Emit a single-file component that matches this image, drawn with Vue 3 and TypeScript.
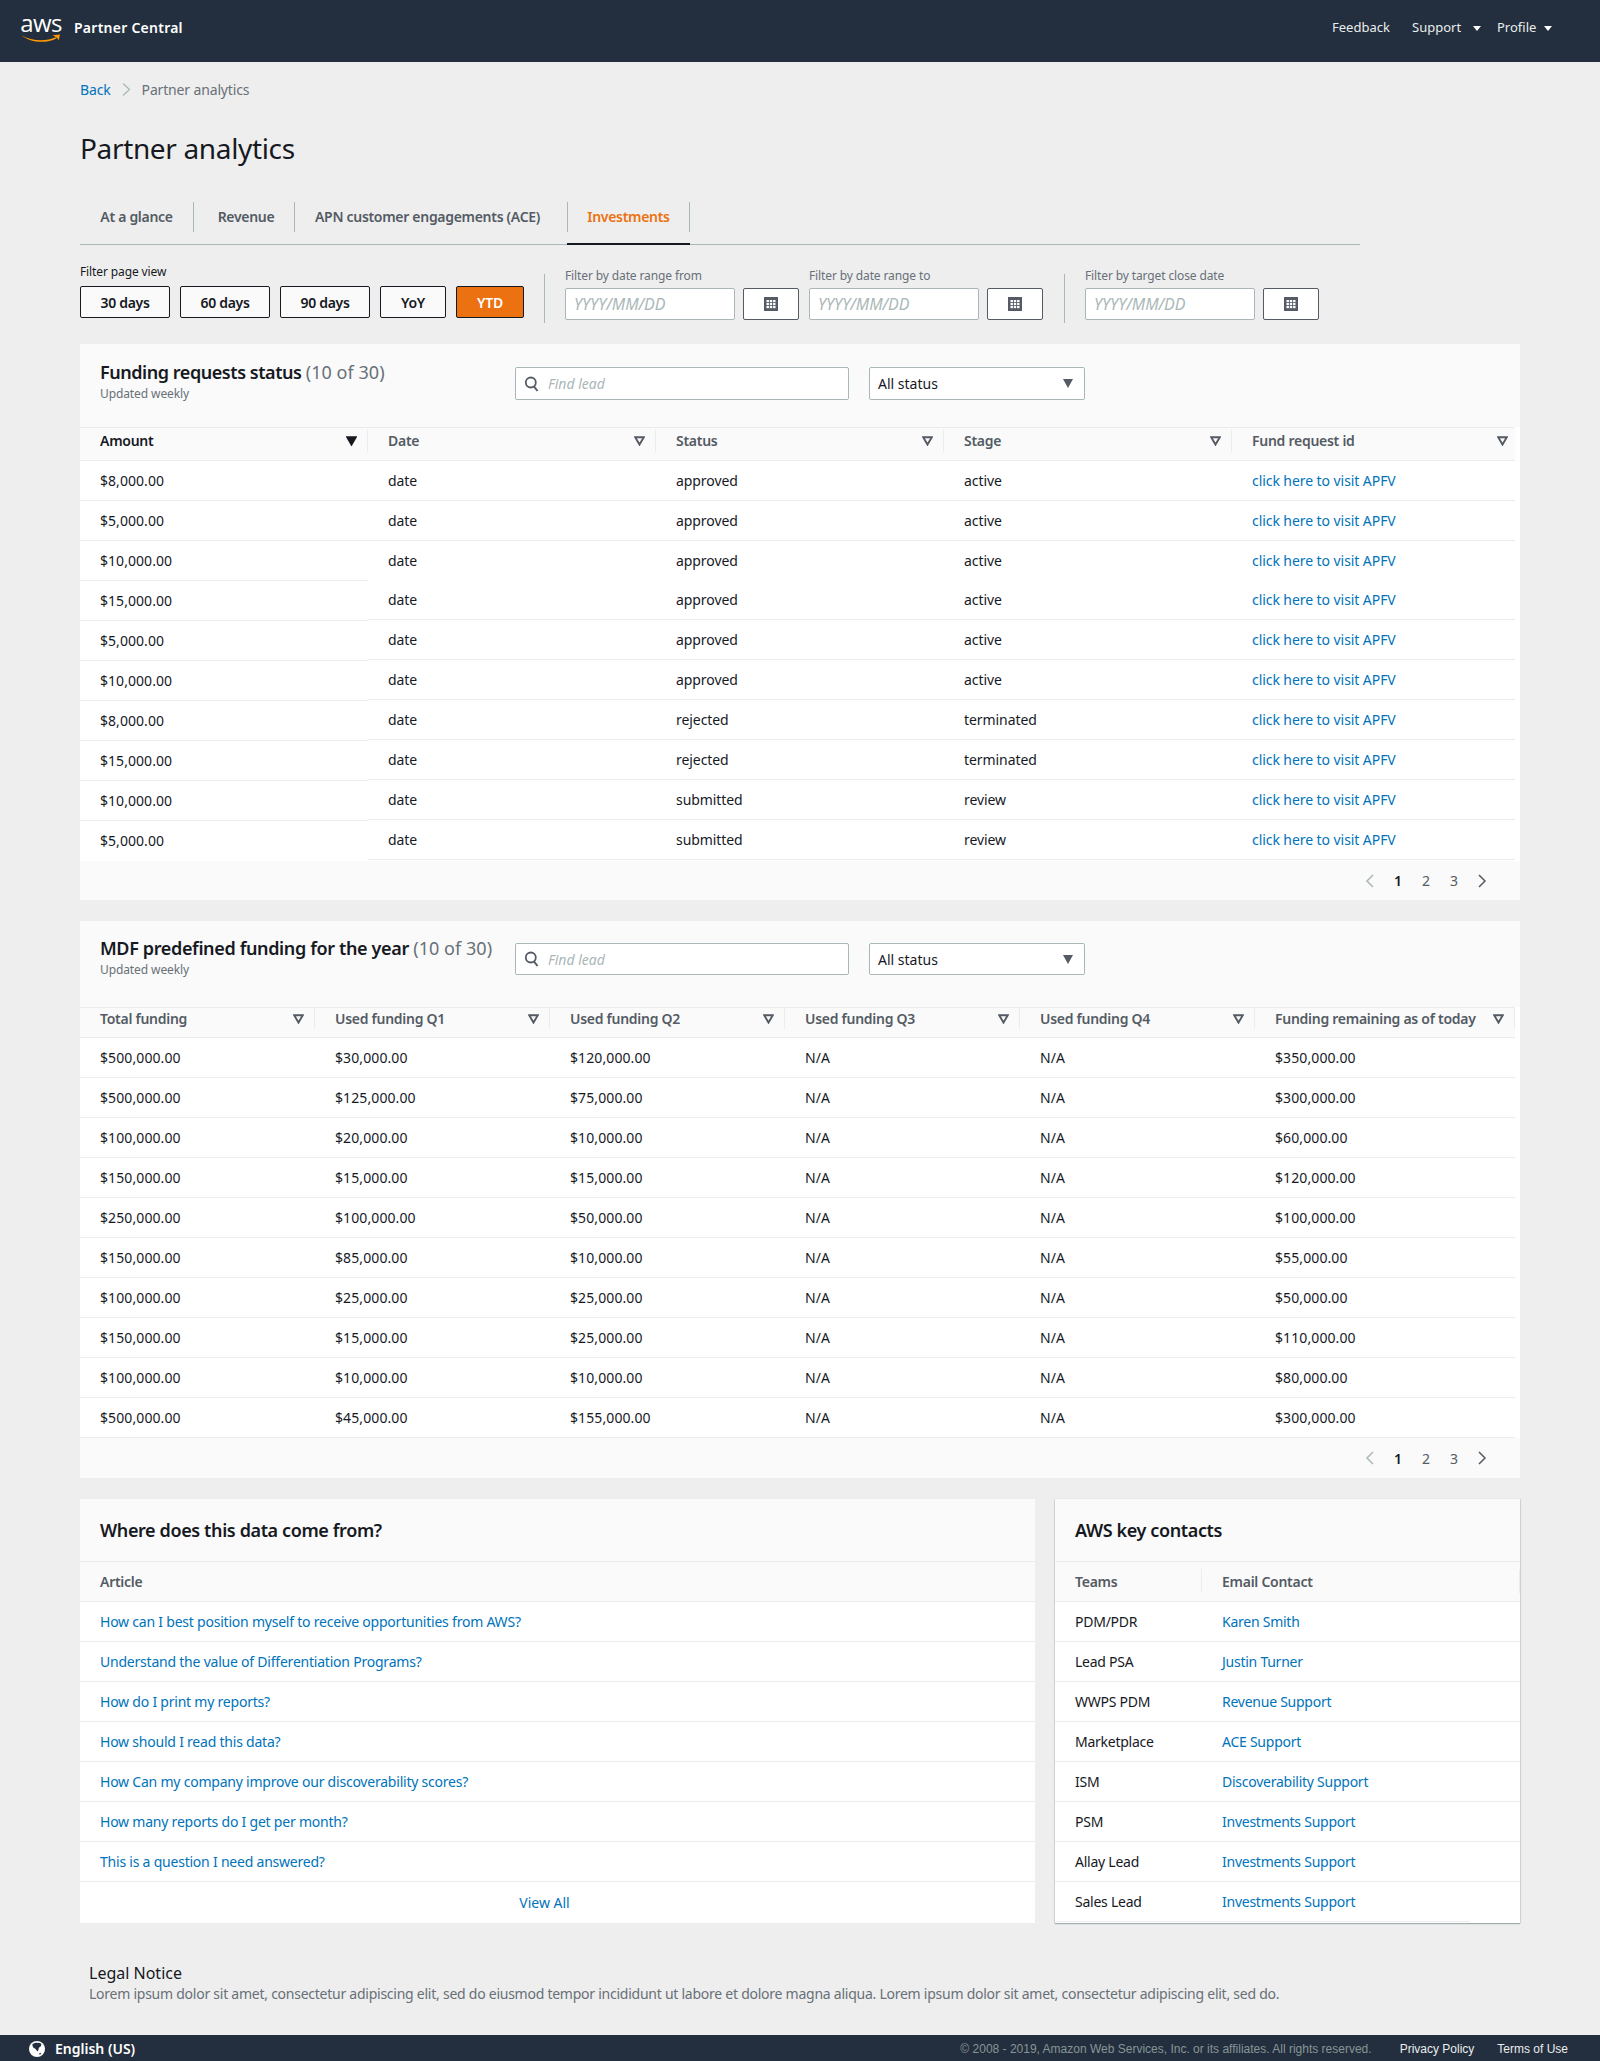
<script setup lang="ts">
const tabs = [
  { label: 'At a glance', w: 114 },
  { label: 'Revenue', w: 101, cls: 'nudge-r' },
  { label: 'APN customer engagements (ACE)', w: 273, cls: 'nudge-l' },
  { label: 'Investments', w: 122, cls: 'active' },
]
const ranges = ['30 days', '60 days', '90 days', 'YoY', 'YTD']
const dateFilters = [
  ['Filter by date range from', 'Filter by date range to'],
  ['Filter by target close date'],
]
const fundHeads = ['Amount', 'Date', 'Status', 'Stage', 'Fund request id']
const amounts = ['$8,000.00', '$5,000.00', '$10,000.00', '$15,000.00', '$5,000.00', '$10,000.00', '$8,000.00', '$15,000.00', '$10,000.00', '$5,000.00']
const fundRows = [
  ['approved', 'active'], ['approved', 'active'], ['approved', 'active'], ['approved', 'active'], ['approved', 'active'],
  ['approved', 'active'], ['rejected', 'terminated'], ['rejected', 'terminated'], ['submitted', 'review'], ['submitted', 'review'],
]
const mdfHeads = ['Total funding', 'Used funding Q1', 'Used funding Q2', 'Used funding Q3', 'Used funding Q4', 'Funding remaining as of today']
const mdfRows = [
  ['$500,000.00', '$30,000.00', '$120,000.00', 'N/A', 'N/A', '$350,000.00'],
  ['$500,000.00', '$125,000.00', '$75,000.00', 'N/A', 'N/A', '$300,000.00'],
  ['$100,000.00', '$20,000.00', '$10,000.00', 'N/A', 'N/A', '$60,000.00'],
  ['$150,000.00', '$15,000.00', '$15,000.00', 'N/A', 'N/A', '$120,000.00'],
  ['$250,000.00', '$100,000.00', '$50,000.00', 'N/A', 'N/A', '$100,000.00'],
  ['$150,000.00', '$85,000.00', '$10,000.00', 'N/A', 'N/A', '$55,000.00'],
  ['$100,000.00', '$25,000.00', '$25,000.00', 'N/A', 'N/A', '$50,000.00'],
  ['$150,000.00', '$15,000.00', '$25,000.00', 'N/A', 'N/A', '$110,000.00'],
  ['$100,000.00', '$10,000.00', '$10,000.00', 'N/A', 'N/A', '$80,000.00'],
  ['$500,000.00', '$45,000.00', '$155,000.00', 'N/A', 'N/A', '$300,000.00'],
]
const articles = [
  'How can I best position myself to receive opportunities from AWS?',
  'Understand the value of Differentiation Programs?',
  'How do I print my reports?',
  'How should I read this data?',
  'How Can my company improve our discoverability scores?',
  'How many reports do I get per month?',
  'This is a question I need answered?',
]
const contacts = [
  ['PDM/PDR', 'Karen Smith'], ['Lead PSA', 'Justin Turner'], ['WWPS PDM', 'Revenue Support'], ['Marketplace', 'ACE Support'],
  ['ISM', 'Discoverability Support'], ['PSM', 'Investments Support'], ['Allay Lead', 'Investments Support'], ['Sales Lead', 'Investments Support'],
]
</script>

<template>
  <div class="page">
    <header class="topbar">
      <div class="logo">
        <span class="logo-text">aws</span>
        <svg class="smile" width="40" height="9" viewBox="0 0 40 9"><path d="M0.5 1.2C10 7 25 8 34.5 3.2L35.4 4.4C25 10 9 8.6 0.5 1.2Z" fill="#f90"/><path d="M31.5 1.2L39 0.4L37.6 6.6C37 4.8 36.2 3.9 35.4 3.4C34.2 2.4 33 1.8 31.5 1.2Z" fill="#f90"/></svg>
      </div>
      <span class="brand">Partner Central</span>
      <nav class="topnav">
        <span class="nav-item feedback">Feedback</span>
        <span class="nav-item support">Support<i class="nav-caret"></i></span>
        <span class="nav-item profile">Profile<i class="nav-caret"></i></span>
      </nav>
    </header>

    <main class="main">
      <div class="crumbs">
        <a class="link">Back</a>
        <svg width="9" height="13" viewBox="0 0 9 13"><path d="M1 0.5L7.5 6.5L1 12.5" fill="none" stroke="#aab7b8" stroke-width="1.3"/></svg>
        <span>Partner analytics</span>
      </div>
      <h1 class="title">Partner analytics</h1>

      <div class="tabs">
        <div v-for="t in tabs" :key="t.label" class="tab" :class="t.cls" :style="{ width: t.w + 'px' }">{{ t.label }}</div>
      </div>

      <div class="filters">
        <div class="range-group">
          <div class="flabel">Filter page view</div>
          <div class="range-btns">
            <button v-for="r in ranges" :key="r" class="rbtn" :class="{ wide: r.includes('days'), yoy: r === 'YoY', ytd: r === 'YTD' }">{{ r }}</button>
          </div>
        </div>
        <template v-for="(group, gi) in dateFilters" :key="gi">
          <div class="vdiv" :class="{ shift: gi === 1 }"></div>
          <div class="date-groups">
            <div v-for="label in group" :key="label" class="date-group">
              <div class="flabel muted">{{ label }}</div>
              <div class="date-row">
                <div class="date-input">YYYY/MM/DD</div>
                <button class="cal-btn">
                  <svg width="14" height="14" viewBox="0 0 14 14"><rect width="14" height="14" fill="#545b64"/><g fill="#fff"><rect x="2.5" y="3" width="2.4" height="2.2"/><rect x="5.8" y="3" width="2.4" height="2.2"/><rect x="9.1" y="3" width="2.4" height="2.2"/><rect x="2.5" y="6" width="2.4" height="2.2"/><rect x="5.8" y="6" width="2.4" height="2.2"/><rect x="9.1" y="6" width="2.4" height="2.2"/><rect x="2.5" y="9" width="2.4" height="2.2"/><rect x="5.8" y="9" width="2.4" height="2.2"/><rect x="9.1" y="9" width="2.4" height="2.2"/></g></svg>
                </button>
              </div>
            </div>
          </div>
        </template>
      </div>

      <section class="card fund">
        <div class="card-head">
          <div class="head-title">
            <h2>Funding requests status <span>(10 of 30)</span></h2>
            <p>Updated weekly</p>
          </div>
          <div class="search">
            <svg width="16" height="16" viewBox="0 0 16 16"><circle cx="6.8" cy="6.5" r="5" fill="none" stroke="#545b64" stroke-width="1.8"/><path d="M10 10.5L13.5 15" stroke="#545b64" stroke-width="2" fill="none"/></svg>
            <em>Find lead</em>
          </div>
          <div class="select">All status<i class="sel-caret"></i></div>
        </div>
        <div class="thead fund-grid">
          <div v-for="(h, i) in fundHeads" :key="h" class="th">
            <div class="th-in" :class="{ strong: i === 0, last: i === 4 }">
              {{ h }}
              <svg width="11" height="10" viewBox="0 0 11 10"><path d="M1.2 1.2H9.8L5.5 8.6Z" :fill="i === 0 ? '#16191f' : 'none'" :stroke="i === 0 ? '#16191f' : '#545b64'" stroke-width="1.9"/></svg>
            </div>
          </div>
        </div>
        <div class="fund-body">
          <div class="first-col">
            <div v-for="(a, i) in amounts" :key="i" class="cell first">{{ a }}</div>
          </div>
          <div class="rest-col">
            <div v-for="(r, i) in fundRows" :key="i" class="rest-row" :class="{ seam: i === 2 }">
              <div>date</div>
              <div>{{ r[0] }}</div>
              <div>{{ r[1] }}</div>
              <div><a class="link">click here to visit APFV</a></div>
            </div>
          </div>
        </div>
        <div class="pager">
          <svg width="10" height="14" viewBox="0 0 10 14"><path d="M8 1L2 7L8 13" fill="none" stroke="#aab7b8" stroke-width="1.5"/></svg>
          <b>1</b><span>2</span><span>3</span>
          <svg width="10" height="14" viewBox="0 0 10 14"><path d="M2 1L8 7L2 13" fill="none" stroke="#545b64" stroke-width="1.5"/></svg>
        </div>
      </section>

      <section class="card mdf">
        <div class="card-head">
          <div class="head-title">
            <h2>MDF predefined funding for the year <span>(10 of 30)</span></h2>
            <p>Updated weekly</p>
          </div>
          <div class="search">
            <svg width="16" height="16" viewBox="0 0 16 16"><circle cx="6.8" cy="6.5" r="5" fill="none" stroke="#545b64" stroke-width="1.8"/><path d="M10 10.5L13.5 15" stroke="#545b64" stroke-width="2" fill="none"/></svg>
            <em>Find lead</em>
          </div>
          <div class="select">All status<i class="sel-caret"></i></div>
        </div>
        <div class="thead mdf-grid">
          <div v-for="h in mdfHeads" :key="h" class="th">
            <div class="th-in">
              {{ h }}
              <svg width="11" height="10" viewBox="0 0 11 10"><path d="M1.2 1.2H9.8L5.5 8.6Z" fill="none" stroke="#545b64" stroke-width="1.9"/></svg>
            </div>
          </div>
        </div>
        <div v-for="(r, i) in mdfRows" :key="i" class="tr mdf-grid">
          <div v-for="(c, j) in r" :key="j" class="td num">{{ c }}</div>
        </div>
        <div class="pager">
          <svg width="10" height="14" viewBox="0 0 10 14"><path d="M8 1L2 7L8 13" fill="none" stroke="#aab7b8" stroke-width="1.5"/></svg>
          <b>1</b><span>2</span><span>3</span>
          <svg width="10" height="14" viewBox="0 0 10 14"><path d="M2 1L8 7L2 13" fill="none" stroke="#545b64" stroke-width="1.5"/></svg>
        </div>
      </section>

      <div class="bottom">
        <section class="card articles">
          <div class="simple-head"><h2>Where does this data come from?</h2></div>
          <div class="thead simple"><div class="th"><div class="th-in">Article</div></div></div>
          <div v-for="a in articles" :key="a" class="tr"><div class="td"><a class="link">{{ a }}</a></div></div>
          <div class="view-all"><a class="link">View All</a></div>
        </section>
        <section class="card contacts">
          <div class="simple-head"><h2>AWS key contacts</h2></div>
          <div class="thead simple contact-grid">
            <div class="th"><div class="th-in">Teams</div></div>
            <div class="th"><div class="th-in">Email Contact</div></div>
          </div>
          <div v-for="c in contacts" :key="c[0]" class="tr contact-grid">
            <div class="td">{{ c[0] }}</div>
            <div class="td"><a class="link">{{ c[1] }}</a></div>
          </div>
        </section>
      </div>

      <div class="legal">
        <h3>Legal Notice</h3>
        <p>Lorem ipsum dolor sit amet, consectetur adipiscing elit, sed do eiusmod tempor incididunt ut labore et dolore magna aliqua. Lorem ipsum dolor sit amet, consectetur adipiscing elit, sed do.</p>
      </div>
    </main>

    <footer class="footer">
      <svg width="16" height="16" viewBox="0 0 16 16"><circle cx="8" cy="8" r="8" fill="#fff"/><path d="M3.5 3C6 1.5 9.5 1.2 12 2.5C13 4 11.5 6 10 6.5C9.5 8 9.5 9.5 8.5 10.5C7.5 9 6.5 7.5 4.8 7C3.8 6 3.2 4.5 3.5 3Z" fill="#232f3e"/><path d="M10 12.5L12.5 11.5L11 14Z" fill="#232f3e"/></svg>
      <span class="lang">English (US)</span>
      <span class="copy">© 2008 - 2019, Amazon Web Services, Inc. or its affiliates. All rights reserved.</span>
      <span class="flink privacy">Privacy Policy</span>
      <span class="flink">Terms of Use</span>
    </footer>
  </div>
</template>

<style>
body { margin: 0; background: #eeeeee; }
</style>

<style scoped>
.page { width: 1600px; height: 2061px; background: #eee; font-family: "Noto Sans", sans-serif; font-size: 14px; color: #16191f; overflow: hidden; }
.link { color: #0073bb; }
h1, h2, h3, p { margin: 0; font-weight: normal; }

.topbar { height: 62px; background: #232f3e; display: flex; align-items: center; padding: 0 0 8px 21px; box-sizing: border-box; color: #fff; }
.logo { width: 40px; display: flex; flex-direction: column; align-items: center; align-self: flex-start; margin-top: 11px; }
.logo-text { font-family: "Open Sans", sans-serif; font-size: 24px; line-height: 24px; height: 23px; letter-spacing: -0.7px; }
.smile { display: block; }
.brand { margin-left: 13px; font-weight: 600; font-size: 14px; letter-spacing: 0.25px; }
.topnav { margin-left: auto; display: flex; align-items: center; padding-right: 48px; }
.nav-item { font-size: 13px; color: #eaeded; display: flex; align-items: center; }
.feedback { width: 80px; }
.support { width: 85px; }
.profile { width: 55px; }
.support .nav-caret { margin-left: 12px; }
.profile .nav-caret { margin-left: 8px; }
.nav-caret { width: 0; height: 0; border-left: 4px solid transparent; border-right: 4px solid transparent; border-top: 5px solid #fff; margin-top: 3px; }

.main { padding: 17px 0 0 80px; width: 1440px; }
.crumbs { display: flex; align-items: center; gap: 11px; height: 20px; color: #687078; letter-spacing: -0.15px; }
.title { font-size: 28px; line-height: 40px; margin-top: 29px; letter-spacing: -0.35px; }

.tabs { display: flex; width: 1280px; margin-top: 34px; border-bottom: 1px solid #aab7b8; height: 42px; }
.tab { height: 30px; line-height: 30px; text-align: center; font-weight: 600; color: #545b64; border-right: 1px solid #aab7b8; box-sizing: border-box; position: relative; white-space: nowrap; letter-spacing: -0.3px; }
.tab.nudge-r { padding-left: 4px; }
.tab.nudge-l { padding-right: 7px; }
.tab.active { color: #ec7211; width: 121px; }
.tab.active::after { content: ""; position: absolute; left: -1px; right: -1px; bottom: -13px; height: 2px; background: #16191f; }

.filters { display: flex; margin-top: 19px; height: 59px; }
.flabel { font-size: 12px; line-height: 16px; letter-spacing: -0.12px; }
.flabel.muted { color: #687078; }
.range-btns { display: flex; gap: 10px; margin-top: 6px; }
.rbtn { height: 32px; padding: 0; background: #fafafa; border: 1px solid #16191f; border-radius: 2px; font: 600 14px "Noto Sans", sans-serif; letter-spacing: -0.3px; color: #16191f; box-sizing: border-box; }
.rbtn.wide { width: 90px; }
.rbtn.yoy { width: 66px; }
.rbtn.ytd { width: 68px; background: #ec7211; color: #fff; }
.vdiv { width: 1px; height: 49px; margin: 10px 20px 0; background: #aab7b8; }
.vdiv.shift { margin-left: 21px; }
.date-groups { display: flex; gap: 10px; padding-top: 4px; }
.date-row { display: flex; gap: 8px; margin-top: 4px; }
.date-input { width: 170px; height: 32px; box-sizing: border-box; background: #fff; border: 1px solid #aab7b8; border-radius: 2px; padding-left: 8px; line-height: 30px; font-size: 16px; font-style: italic; color: #aab7b8; letter-spacing: -0.1px; }
.cal-btn { width: 56px; height: 32px; box-sizing: border-box; background: #fff; border: 1px solid #545b64; border-radius: 2px; padding: 0; display: flex; align-items: center; justify-content: center; }

.card { background: #fff; }
.fund { margin-top: 21px; }
.mdf { margin-top: 21px; }
.card-head { background: #fafafa; display: flex; box-sizing: border-box; }
.fund .card-head { height: 83px; padding-top: 23px; }
.mdf .card-head { height: 86px; padding-top: 22px; }
.head-title { width: 435px; padding-left: 20px; box-sizing: border-box; margin-top: -7px; flex: none; }
.head-title h2 { font-size: 18px; line-height: 24px; font-weight: 600; white-space: nowrap; letter-spacing: -0.45px; }
.mdf .head-title h2 { letter-spacing: -0.36px; }
.head-title h2 span { font-weight: normal; color: #687078; letter-spacing: 0.05px; }
.head-title p { font-size: 12px; line-height: 16px; color: #687078; margin-top: 2px; letter-spacing: -0.1px; }
.search { width: 334px; height: 33px; box-sizing: border-box; background: #fff; border: 1px solid #aab7b8; border-radius: 2px; display: flex; align-items: center; padding-left: 8px; gap: 8px; }
.search em { color: #aab7b8; }
.select { width: 216px; height: 33px; box-sizing: border-box; margin-left: 20px; background: #fff; border: 1px solid #aab7b8; border-radius: 2px; display: flex; align-items: center; justify-content: space-between; padding: 0 11px 0 8px; }
.mdf .search, .mdf .select { height: 32px; }
.sel-caret { width: 0; height: 0; border-left: 5.5px solid transparent; border-right: 5.5px solid transparent; border-top: 9px solid #545b64; }

.thead { background: #fafafa; box-sizing: border-box; border-top: 1px solid #eaeded; border-bottom: 1px solid #eaeded; }
.fund-grid { display: grid; grid-template-columns: 288px 288px 288px 288px 283px; width: 1435px; height: 34px; }
.mdf-grid { display: grid; grid-template-columns: 235px 235px 235px 235px 235px 260px; width: 1435px; }
.mdf .thead { height: 31px; }
.fund .th-in { height: 23px; margin-top: 1px; }
.mdf .th-in { height: 21px; }
.th { min-width: 0; }
.th-in { display: flex; align-items: center; justify-content: space-between; padding: 0 10px 0 20px; font-weight: 600; color: #545b64; border-right: 1px solid #eaeded; box-sizing: border-box; white-space: nowrap; letter-spacing: -0.27px; }
.th-in.strong { color: #16191f; }
.th-in.last { border-right: none; padding-right: 7px; }
.simple .th-in { height: 24px; margin-top: 7px; }
.simple { height: 41px; }
.articles .th-in { border-right: none; }
.fund-body { display: flex; width: 1435px; }
.first-col { width: 288px; flex: none; }
.cell.first { height: 40px; line-height: 39px; padding-left: 20px; box-sizing: border-box; border-bottom: 1px solid #eaeded; letter-spacing: 0.05px; }
.cell.first:last-child { border-bottom: none; }
.rest-col { flex: 1; }
.rest-row { display: grid; grid-template-columns: 288px 288px 288px 283px; height: 40px; line-height: 39px; box-sizing: border-box; border-bottom: 1px solid #eaeded; letter-spacing: -0.07px; }
.rest-row > div { padding-left: 20px; }
.rest-row.seam { height: 39px; border-bottom: none; }
.pager { height: 40px; background: #fafafa; display: flex; align-items: center; justify-content: flex-end; padding-right: 24px; color: #545b64; }
.fund .pager { height: 39px; }
.pager > * { width: 28px; text-align: center; flex: none; }
.pager b { color: #16191f; font-weight: 600; }
.mdf .tr { width: 1435px; }
.td.num { letter-spacing: 0.1px; }

.bottom { display: flex; gap: 20px; margin-top: 21px; }
.articles { width: 955px; }
.contacts { width: 465px; box-shadow: 0 1px 1px rgba(0,28,36,.3), 1px 0 1px rgba(0,28,36,.08), -1px 0 1px rgba(0,28,36,.08); }
.simple-head { height: 62px; background: #fafafa; padding-left: 20px; display: flex; align-items: center; }
.simple-head h2 { font-size: 18px; font-weight: 600; letter-spacing: -0.38px; }
.tr { height: 40px; line-height: 39px; box-sizing: border-box; border-bottom: 1px solid #eaeded; }
.td { padding-left: 20px; white-space: nowrap; }
.articles .td { letter-spacing: -0.22px; }
.contacts .td { letter-spacing: -0.25px; }
.contacts .tr:last-child { border-bottom: none; }
.contacts .tr:last-child .td { height: 40px; box-sizing: border-box; border-bottom: 1px solid #eaeded; }
.contacts .tr:last-child .td:last-child { margin-right: 50px; }
.contact-grid { display: grid; grid-template-columns: 147px 318px; }
.view-all { height: 41px; line-height: 42px; text-align: center; padding-right: 26px; }

.legal { margin: 39px 0 0 9px; width: 1440px; }
.legal h3 { font-size: 16px; line-height: 22px; }
.legal p { line-height: 20px; color: #687078; white-space: nowrap; letter-spacing: -0.25px; }

.footer { position: relative; margin-top: 31px; height: 27px; background: #232f3e; display: flex; align-items: center; padding-left: 29px; color: #fff; box-sizing: border-box; }
.lang { margin-left: 10px; font-weight: 600; }
.copy { margin-left: auto; font: 12px "Liberation Sans", sans-serif; color: #879596; }
.flink { font: 12px "Liberation Sans", sans-serif; color: #eaeded; margin-left: 23px; margin-right: 32px; }
.flink.privacy { margin-left: 28px; margin-right: 0; }
</style>
